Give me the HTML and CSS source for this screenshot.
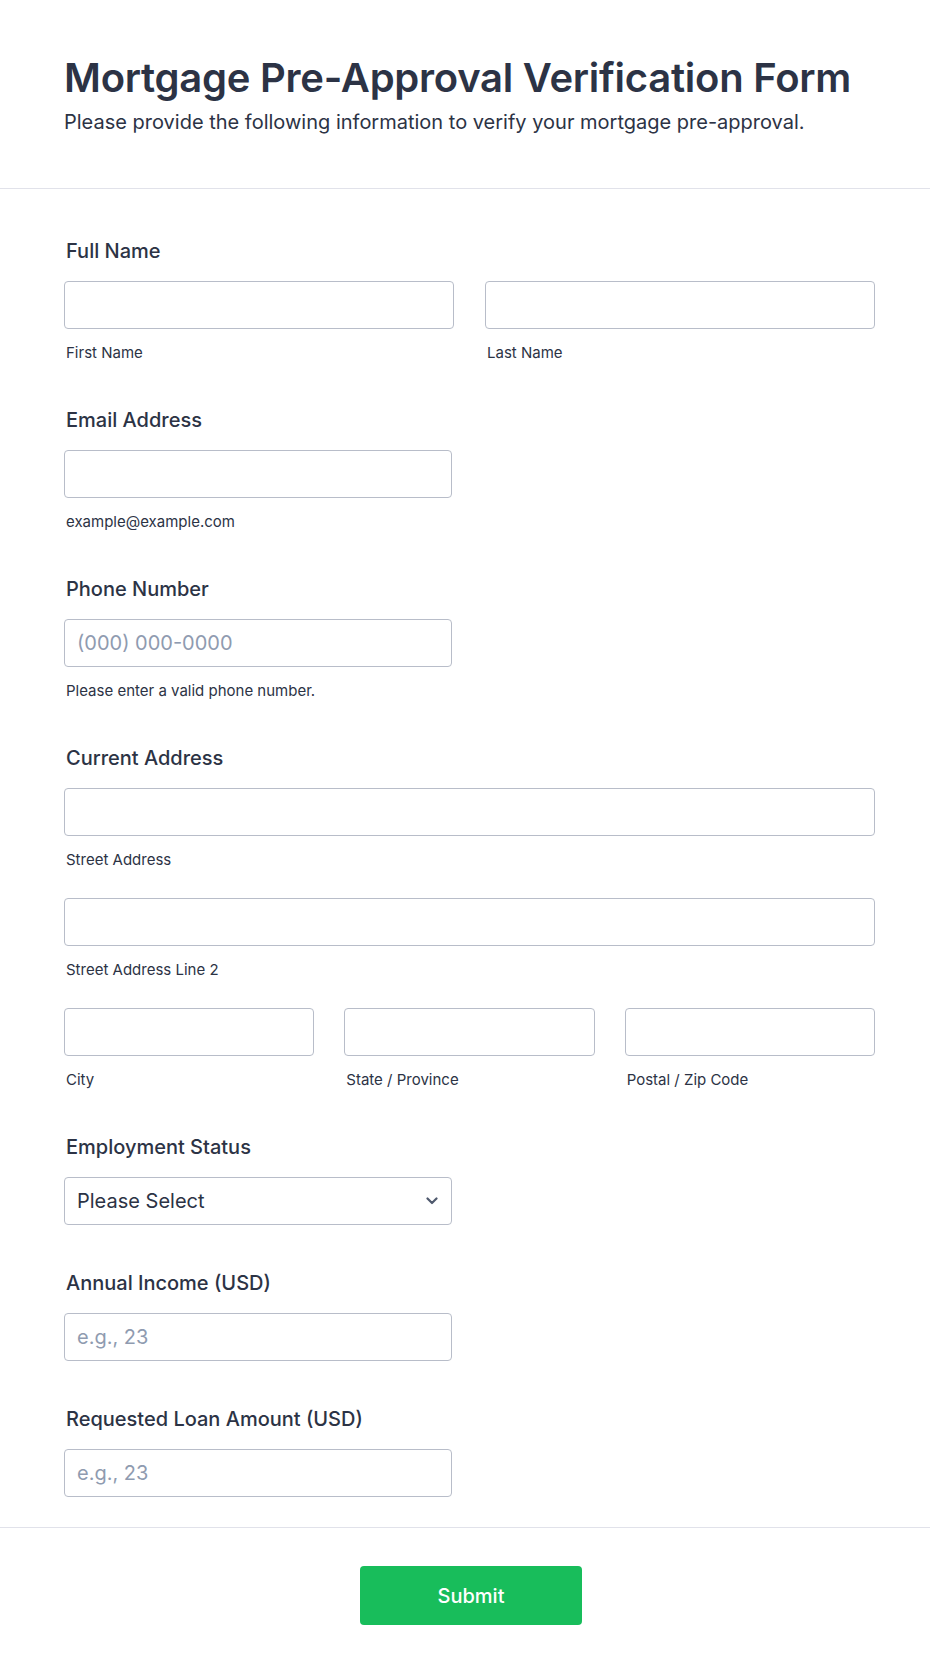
FILE: index.html
```html
<!DOCTYPE html>
<html lang="en">
<head>
<meta charset="utf-8">
<title>Mortgage Pre-Approval Verification Form</title>
<link rel="stylesheet" href="styles.css">
</head>
<body>
<form class="form">
  <header class="form-header">
    <h1 class="form-title">Mortgage Pre-Approval Verification Form</h1>
    <p class="form-subtitle">Please provide the following information to verify your mortgage pre-approval.</p>
  </header>

  <div class="form-body">
    <div class="field">
      <label class="field-label">Full Name</label>
      <div class="cols cols-2">
        <div class="sub">
          <input class="input" type="text">
          <span class="sublabel">First Name</span>
        </div>
        <div class="sub">
          <input class="input" type="text">
          <span class="sublabel">Last Name</span>
        </div>
      </div>
    </div>

    <div class="field">
      <label class="field-label">Email Address</label>
      <div class="sub half">
        <input class="input" type="email">
        <span class="sublabel">example@example.com</span>
      </div>
    </div>

    <div class="field">
      <label class="field-label">Phone Number</label>
      <div class="sub half">
        <input class="input" type="tel" placeholder="(000) 000-0000">
        <span class="sublabel">Please enter a valid phone number.</span>
      </div>
    </div>

    <div class="field">
      <label class="field-label">Current Address</label>
      <div class="address">
        <div class="sub">
          <input class="input" type="text">
          <span class="sublabel">Street Address</span>
        </div>
        <div class="sub">
          <input class="input" type="text">
          <span class="sublabel">Street Address Line 2</span>
        </div>
        <div class="cols cols-3">
          <div class="sub">
            <input class="input" type="text">
            <span class="sublabel">City</span>
          </div>
          <div class="sub">
            <input class="input" type="text">
            <span class="sublabel">State / Province</span>
          </div>
          <div class="sub">
            <input class="input" type="text">
            <span class="sublabel">Postal / Zip Code</span>
          </div>
        </div>
      </div>
    </div>

    <div class="field">
      <label class="field-label">Employment Status</label>
      <div class="select half">
        <span class="select-value">Please Select</span>
        <svg class="chevron" width="12" height="8" viewBox="0 0 12 8" aria-hidden="true">
          <path d="M1.5 1.5 L6 6 L10.5 1.5" fill="none" stroke="#505a6e" stroke-width="2.2" stroke-linecap="round" stroke-linejoin="round"/>
        </svg>
      </div>
    </div>

    <div class="field">
      <label class="field-label">Annual Income (USD)</label>
      <input class="input half" type="text" placeholder="e.g., 23">
    </div>

    <div class="field">
      <label class="field-label">Requested Loan Amount (USD)</label>
      <input class="input half" type="text" placeholder="e.g., 23">
    </div>
  </div>

  <footer class="form-footer">
    <button class="submit" type="button">Submit</button>
  </footer>
</form>
</body>
</html>
```

FILE: styles.css
```css
* {
  box-sizing: border-box;
}

html, body {
  margin: 0;
  padding: 0;
  background: #ffffff;
}

body {
  font-family: Inter, "Noto Sans", "Liberation Sans", sans-serif;
  color: #2c3345;
}

.form {
  width: 930px;
  margin: 0;
}

.form-header {
  padding: 53.5px 55px 54.5px 64px;
  border-bottom: 1px solid #e1e2ea;
}

.form-title {
  margin: 0;
  font-size: 40px;
  line-height: 48px;
  font-weight: 600;
  letter-spacing: -0.25px;
  color: #2c3345;
}

.form-subtitle {
  margin: 8px 0 0;
  font-size: 20px;
  line-height: 24px;
  font-weight: 400;
  color: #2c3345;
}

.form-body {
  padding: 50px 55px 30px 64px;
  display: flex;
  flex-direction: column;
  gap: 46px;
}

.field {
  display: flex;
  flex-direction: column;
}

.field-label {
  display: block;
  font-size: 20px;
  line-height: 24px;
  font-weight: 500;
  color: #2c3345;
  margin: 0 0 18px 2px;
}

.cols {
  display: grid;
}

.cols-2 {
  grid-template-columns: 1fr 1fr;
  column-gap: 31px;
}

.cols-3 {
  grid-template-columns: 1fr 1fr 1fr;
  column-gap: 30px;
}

.address {
  display: flex;
  flex-direction: column;
  gap: 29px;
}

.sub {
  display: flex;
  flex-direction: column;
}

.half {
  width: 388px;
}

.input {
  display: block;
  width: 100%;
  height: 48px;
  margin: 0;
  padding: 0 12px;
  border: 1px solid #b8bdc9;
  border-radius: 4px;
  background: #ffffff;
  font-family: Inter, "Noto Sans", "Liberation Sans", sans-serif;
  font-size: 20px;
  color: #2c3345;
  outline: none;
}

.input.half {
  width: 388px;
}

.input::placeholder {
  color: #8f9bb0;
  opacity: 1;
}

.sublabel {
  display: block;
  margin: 15px 0 0 2px;
  font-size: 15px;
  line-height: 18px;
  color: #2c3345;
}

.select {
  display: flex;
  align-items: center;
  justify-content: space-between;
  height: 48px;
  padding: 0 13px 0 12px;
  border: 1px solid #b8bdc9;
  border-radius: 4px;
  background: #ffffff;
}

.select-value {
  font-size: 20px;
  line-height: 24px;
  color: #2c3345;
}

.chevron {
  display: block;
}

.form-footer {
  border-top: 1px solid #e1e2ea;
  padding: 38px 0 50px;
  display: flex;
  justify-content: center;
}

.submit {
  width: 222px;
  height: 59px;
  margin-left: 12px;
  border: none;
  border-radius: 4px;
  background: #18bd5b;
  color: #ffffff;
  font-family: Inter, "Noto Sans", "Liberation Sans", sans-serif;
  font-size: 20px;
  font-weight: 500;
  cursor: pointer;
}
```
